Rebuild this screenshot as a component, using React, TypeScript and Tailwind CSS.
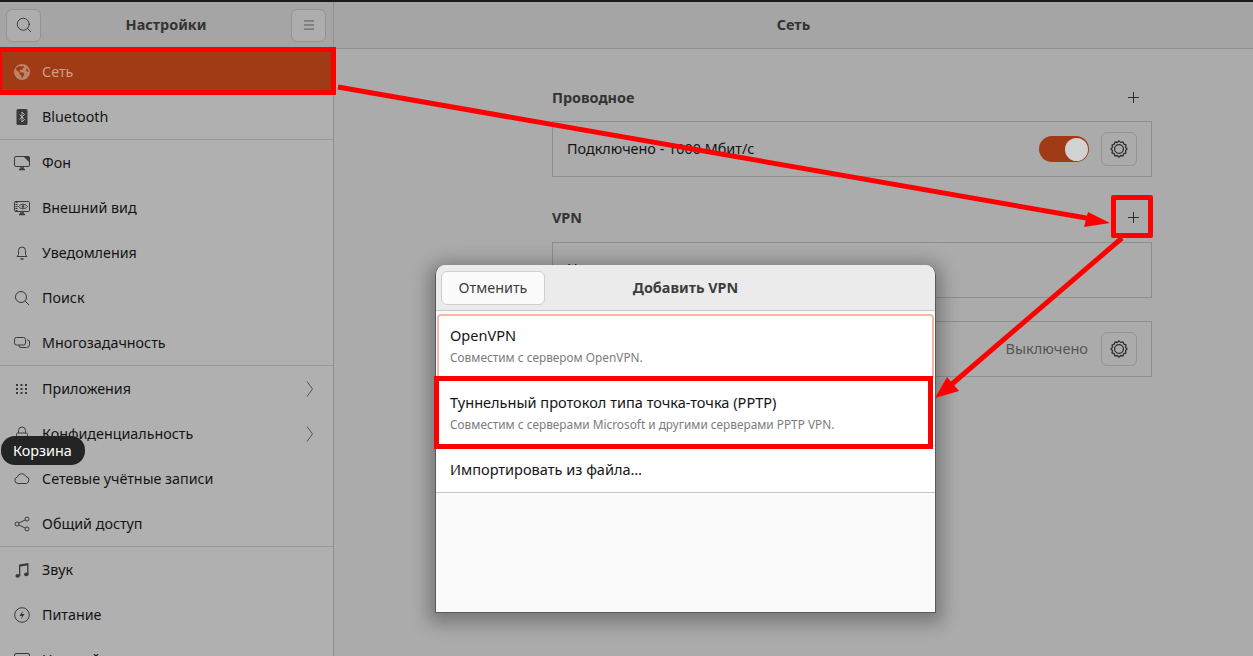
import React from 'react';
import { Search, Menu } from 'lucide-react';

const ic = 'w-4 h-4 text-[#3a3a3a]';

function Svg({ children, className }: { children: React.ReactNode; className?: string }) {
  return (
    <svg viewBox="0 0 16 16" fill="none" stroke="currentColor" strokeWidth="1" className={className ?? ic}>
      {children}
    </svg>
  );
}

const GlobeIcon = () => (
  <svg viewBox="0 0 16 16" className="w-4 h-4 text-[#bd8468]" fill="currentColor">
    <path d="M8 0a8 8 0 1 0 0 16A8 8 0 0 0 8 0zM3 3.2l2.4-1.3 2.2.6 1.6-.7 1 1.4-1.5 1.3-.6 1.6-1.9-.3-.6 1.4 1.3 1.2 2.5.2.9 1.6-1.2 2.8-1.3 1-.6-2.6-1.9-1.5.2-1.6-2.4-1.6L1.5 5zM12 5l1.6-.6.9 3-1.6.7z" fillRule="evenodd" />
  </svg>
);

const BluetoothIcon = () => (
  <svg viewBox="0 0 16 16" className={ic}>
    <rect x="2.5" y="0" width="11" height="16" rx="1.5" fill="currentColor" />
    <path d="M5.5 5.5 10.5 10.5 8 13V3l2.5 2.5L5.5 10.5" fill="none" stroke="#b0b0b0" strokeWidth="1" />
  </svg>
);

const WallpaperIcon = () => (
  <Svg>
    <rect x="0.5" y="1.5" width="15" height="10" rx="1.5" />
    <path d="M10 1.5h4a1.5 1.5 0 0 1 1.500 1.500V7z" fill="currentColor" />
    <path d="M5 14.500h6M7 12v2h2v-2" strokeWidth="1.500" />
  </Svg>
);

const AppearanceIcon = () => (
  <Svg>
    <rect x="0.5" y="1.500" width="15" height="10" rx="1" />
    <path d="M2.500 2v9" strokeWidth="2" strokeDasharray="1 1" />
    <path d="M4.500 6.500c2.500-3 6.500-3 9 0-2.500 3-6.500 3-9 0z" />
    <circle cx="9" cy="6.500" r="1.300" fill="currentColor" stroke="none" />
    <path d="M5 14.500h6M7 12v2h2v-2" strokeWidth="1.500" />
  </Svg>
);

const BellIcon = () => (
  <Svg>
    <path d="M3 11.500h10l-1.500-2V5.500a3.500 3.500 0 0 0-7 0v4z" />
    <path d="M6.500 14h3" strokeWidth="1.500" />
  </Svg>
);

const SearchSmall = () => (
  <Svg>
    <circle cx="7" cy="7" r="5.500" />
    <path d="m11 11 4 4" />
  </Svg>
);

const MultitaskIcon = () => (
  <Svg>
    <rect x="0.500" y="2.500" width="11" height="7.500" rx="2" />
    <path d="M13 5h.5a2 2 0 0 1 2 2v2.500a3 3 0 0 1-3 3H7a2 2 0 0 1-2-2V10" />
  </Svg>
);

const AppsIcon = () => (
  <svg viewBox="0 0 16 16" className={ic} fill="currentColor">
    {[3, 7, 11].map(y =>
      [2, 6.500, 11].map(x => <rect key={`${x}-${y}`} x={x} y={y} width="2" height="2" />),
    )}
  </svg>
);

const LockIcon = () => (
  <Svg>
    <path d="M4.500 7V4.500a3.500 3.500 0 0 1 7 0V7" />
    <rect x="2.500" y="7" width="11" height="8" rx="1.500" />
  </Svg>
);

const CloudIcon = () => (
  <Svg>
    <path d="M4 12.500a3.300 3.300 0 0 1-.6-6.500 4.500 4.500 0 0 1 8.500-.5 3.600 3.600 0 0 1 .5 7z" />
  </Svg>
);

const ShareIcon = () => (
  <Svg>
    <circle cx="13" cy="3" r="2" />
    <circle cx="3" cy="8" r="2" />
    <circle cx="13" cy="13" r="2" />
    <path d="M11.200 4 4.800 7M4.800 9l6.400 3" />
  </Svg>
);

const MusicIcon = () => (
  <svg viewBox="0 0 16 16" className={ic} fill="currentColor">
    <path d="M5 2.500 14.500 1v11h-1.300V3.500L6.300 4.500V14H5z" />
    <ellipse cx="3.700" cy="13.800" rx="2.300" ry="1.900" />
    <ellipse cx="12.300" cy="12.300" rx="2.300" ry="1.900" />
  </svg>
);

const PowerIcon = () => (
  <Svg>
    <circle cx="8" cy="8" r="7.300" />
    <path d="M9 3.500 5.500 9H8l-1 3.500L10.500 7H8z" fill="currentColor" stroke="none" />
  </Svg>
);

const DisplayIcon = () => (
  <Svg>
    <rect x="0.500" y="1.500" width="15" height="10" rx="1.500" />
  </Svg>
);

const ChevronIcon = () => (
  <svg viewBox="0 0 8 16" className="w-[8px] h-[16px] text-[#555]" fill="none" stroke="currentColor" strokeWidth="1">
    <path d="M1 .5 6.500 8 1 15.500" />
  </svg>
);

const PlusIcon = () => (
  <svg viewBox="0 0 13 13" className="w-[13px] h-[13px] mr-[12px] -mt-[1px] text-[#2e2e2e]" fill="none" stroke="currentColor" strokeWidth="1">
    <path d="M6.500 1v11M1 6.500h11" />
  </svg>
);

const GearIcon = () => (
  <svg viewBox="0 0 16 16" className="w-[18px] h-[18px] text-[#2c2c2c]" fill="none" stroke="currentColor">
    <circle cx="8" cy="8" r="3.900" strokeWidth="1.100" />
    <path
      d="M8 .8l1.500 1.300 2-.4.8 1.900 1.900.8-.4 2L15.200 8l-1.400 1.500.4 2-1.900.8-.8 1.900-2-.4L8 15.200l-1.500-1.400-2 .4-.8-1.900-1.900-.8.4-2L.8 8l1.400-1.500-.4-2 1.900-.8.8-1.900 2 .4z"
      strokeWidth="1.100"
    />
  </svg>
);

type Item = { label: string; icon: React.ReactNode; chevron?: boolean; active?: boolean };

const groups: Item[][] = [
  [
    { label: 'Сеть', icon: <GlobeIcon />, active: true },
    { label: 'Bluetooth', icon: <BluetoothIcon /> },
  ],
  [
    { label: 'Фон', icon: <WallpaperIcon /> },
    { label: 'Внешний вид', icon: <AppearanceIcon /> },
    { label: 'Уведомления', icon: <BellIcon /> },
    { label: 'Поиск', icon: <SearchSmall /> },
    { label: 'Многозадачность', icon: <MultitaskIcon /> },
  ],
  [
    { label: 'Приложения', icon: <AppsIcon />, chevron: true },
    { label: 'Конфиденциальность', icon: <LockIcon />, chevron: true },
    { label: 'Сетевые учётные записи', icon: <CloudIcon /> },
    { label: 'Общий доступ', icon: <ShareIcon /> },
  ],
  [
    { label: 'Звук', icon: <MusicIcon /> },
    { label: 'Питание', icon: <PowerIcon /> },
    { label: 'Настройки', icon: <DisplayIcon /> },
  ],
];

function SidebarRow({ item }: { item: Item }) {
  return (
    <div
      className={`h-[45px] shrink-0 flex items-center pl-[14px] pr-[19px] gap-[12px] text-[14.3px] ${
        item.active ? 'bg-[#a03b15] text-[#cf9f89]' : 'text-[#141414]'
      }`}
    >
      {item.icon}
      <span className="flex-1 whitespace-nowrap">{item.label}</span>
      {item.chevron && <ChevronIcon />}
    </div>
  );
}

function HeaderButton({ children }: { children: React.ReactNode }) {
  return (
    <div className="w-[35px] h-[33px] rounded-[6px] border border-[#939393] bg-[#adadad] flex items-center justify-center text-[#303030]">
      {children}
    </div>
  );
}

function SectionTitle({ title }: { title: string }) {
  return (
    <div className="h-[24px] flex items-center justify-between">
      <span className="font-bold text-[#333]">{title}</span>
      <PlusIcon />
    </div>
  );
}

function GearButton() {
  return (
    <div className="w-[36px] h-[34px] rounded-[6px] border border-[#939393] flex items-center justify-center">
      <GearIcon />
    </div>
  );
}

function Card({ children }: { children: React.ReactNode }) {
  return <div className="h-[56px] border border-[#8e8e8e] flex items-center pl-[14px] pr-[14px]">{children}</div>;
}

function VpnRow({ title, sub, inset }: { title: string; sub?: string; inset?: boolean }) {
  return (
    <div className={`flex flex-col justify-center h-full ${inset ? 'px-[11px] pb-[2px]' : 'px-[14px]'}`}>
      <div className="text-[#141414] text-[14.55px] leading-[20px] whitespace-nowrap">{title}</div>
      {sub && <div className="text-[11.85px] text-[#7c7c7c] leading-[16px] mt-[4px] whitespace-nowrap">{sub}</div>}
    </div>
  );
}

export default function App() {
  return (
    <div
      className="relative w-[1253px] h-[656px] overflow-hidden bg-[#ababab] text-[14.4px]"
      style={{ fontFamily: '"Noto Sans", "Open Sans", sans-serif' }}
    >
      <div className="h-[2px] bg-[#1a1a1a]" />
      <div className="flex h-[654px]">
        {/* sidebar */}
        <div className="w-[334px] shrink-0 border-r border-[#8f8f8f] bg-[#b0b0b0] flex flex-col overflow-hidden">
          <div className="h-[47px] shrink-0 bg-[#a5a5a5] border-b border-[#8f8f8f] flex items-center justify-between pl-[6px] pr-[7px]">
            <HeaderButton>
              <Search className="w-[18px] h-[18px]" strokeWidth={1.2} />
            </HeaderButton>
            <span className="font-bold text-[#333]">Настройки</span>
            <HeaderButton>
              <Menu className="w-[14px] h-[14px]" strokeWidth={1.2} />
            </HeaderButton>
          </div>
          {groups.map((g, i) => (
            <div key={i} className={i < groups.length - 1 ? 'border-b border-[#989898]' : ''}>
              {g.map(item => (
                <SidebarRow key={item.label} item={item} />
              ))}
            </div>
          ))}
        </div>

        {/* main */}
        <div className="flex-1 flex flex-col">
          <div className="h-[47px] shrink-0 bg-[#a5a5a5] border-b border-[#8f8f8f] flex items-center justify-center font-bold text-[#333]">
            Сеть
          </div>
          <div className="w-[600px] ml-[218px] mt-[37px] flex flex-col">
            <SectionTitle title="Проводное" />
            <div className="mt-[11px]">
              <Card>
                <span className="flex-1 text-[#141414]">Подключено - 1000 Мбит/с</span>
                <div className="w-[50px] h-[26px] rounded-full bg-[#a03b15] mr-[12px] flex justify-end items-center pr-[1px]">
                  <div className="w-[23px] h-[23px] rounded-full bg-[#d2d2d2]" />
                </div>
                <GearButton />
              </Card>
            </div>
            <div className="mt-[29px]">
              <SectionTitle title="VPN" />
            </div>
            <div className="mt-[12px]">
              <Card>
                <span className="text-[#141414] -mt-[2px]">Не настроено</span>
              </Card>
            </div>
            <div className="mt-[23px]">
              <Card>
                <span className="flex-1" />
                <span className="text-[#555] text-[14.55px] mr-[13px]">Выключено</span>
                <GearButton />
              </Card>
            </div>
          </div>
        </div>
      </div>

      {/* dialog */}
      <div className="absolute left-[435px] top-[265px] w-[501px] h-[348px] rounded-t-[10px] bg-[#fafafa] border border-[#5a5a5a] border-t-0 shadow-[0_4px_18px_6px_rgba(0,0,0,0.3)] flex flex-col overflow-hidden">
        <div className="relative h-[46px] shrink-0 bg-[#ebebeb] border-b border-[#c8c8c8] flex items-center justify-center">
          <div className="absolute left-[5px] top-[6px] w-[104px] h-[34px] rounded-[6px] bg-[#fbfbfb] border border-[#cfcfcf] flex items-center justify-center text-[#3d3d3d]">
            Отменить
          </div>
          <span className="font-bold text-[#3d3d3d]">Добавить VPN</span>
        </div>
        <div className="mt-[3px] bg-white border-b border-[#c4c4c4] flex flex-col">
          <div className="h-[64px] mx-[1px] border-2 border-[#f6b9a3] rounded-t-[4px]">
            <VpnRow title="OpenVPN" sub="Совместим с сервером OpenVPN." inset />
          </div>
          <div className="h-[67px]">
            <VpnRow title="Туннельный протокол типа точка-точка (PPTP)" sub="Совместим с серверами Microsoft и другими серверами PPTP VPN." />
          </div>
          <div className="h-[47px] border-t border-[#e0e0e0]">
            <VpnRow title="Импортировать из файла…" />
          </div>
        </div>
      </div>

      {/* dock tooltip */}
      <div className="absolute left-[1px] top-[436px] w-[84px] h-[29px] rounded-[14px] bg-[#242424] text-white flex items-center pl-[12px]">
        Корзина
      </div>

      {/* red annotations */}
      <div className="absolute left-[-3px] top-[47px] w-[339px] h-[48px] border-[5px] border-[#ff0000]" />
      <div className="absolute left-[1111px] top-[195px] w-[42px] h-[43px] border-[5px] border-[#ff0000] rounded-[2px]" />
      <div className="absolute left-[434px] top-[376px] w-[499px] h-[73px] border-[5px] border-[#ff0000]" />
      <svg className="absolute inset-0 pointer-events-none" width="1253" height="656" viewBox="0 0 1253 656">
        <path d="M338 87 1092 219" stroke="#ff0000" strokeWidth="5" />
        <path d="M1110 223 1088 212 1084 227z" fill="#ff0000" />
        <path d="M1122 238 952 384" stroke="#ff0000" strokeWidth="5" />
        <path d="M935 398 947 377 959 391z" fill="#ff0000" />
      </svg>
    </div>
  );
}
